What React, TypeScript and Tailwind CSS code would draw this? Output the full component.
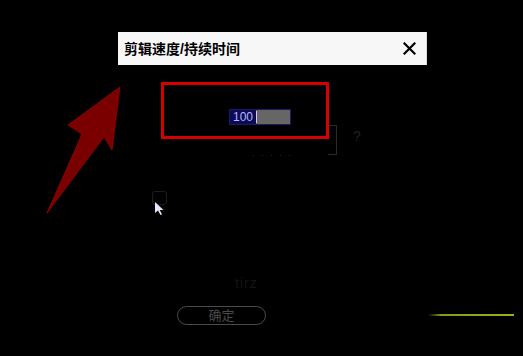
import React from "react";

export default function App() {
  return (
    <div
      className="relative w-[523px] h-[356px] bg-black overflow-hidden"
      style={{ fontFamily: '"Liberation Sans", "Noto Sans CJK SC", sans-serif' }}
    >
      {/* dialog */}
      <div className="flex flex-col pl-[118px] pt-[32px]">
        <div className="flex items-center justify-between w-[309px] h-[33px] bg-[#f7f7f7] pl-[6px] pr-[10px] border-r border-[#ddd]">
          <span className="text-[14px] font-bold text-black leading-none">
            剪辑速度/持续时间
          </span>
          <svg width="13" height="13" viewBox="0 0 13 13">
            <path d="M1.5 1.5 L11.5 11.5 M11.5 1.5 L1.5 11.5" stroke="#000" strokeWidth="2.2" strokeLinecap="square" />
          </svg>
        </div>

        {/* body */}
        <div className="relative flex flex-col w-[309px] h-[260px]">
          <div className="flex items-center ml-[111px] mt-[44px] w-[62px] h-[19px] bg-[#666] border border-[#1a1a66]">
            <span className="flex items-center h-full bg-[#0b0b55] px-[3px] text-[12px] text-[#b9b4ff] leading-none">
              100
            </span>
            <span className="w-px h-[12px] bg-[#e0c0ff]" />
          </div>

          <div className="flex items-start ml-[210px]">
            <div className="w-[9px] h-[30px] border-t border-r border-b border-[#2a2a2a]" />
            <span className="ml-[16px] mt-[4px] text-[14px] text-[#222] leading-none">?</span>
          </div>

          <div className="flex gap-[8px] ml-[135px] mt-[0px]">
            {[0, 1, 2, 3, 4].map((i) => (
              <span key={i} className="w-px h-px bg-[#1a1a88]" />
            ))}
          </div>

          <div className="flex flex-col ml-[34px] mt-[35px]">
            <div className="w-[15px] h-[14px] rounded-[3px] border border-[#1c1c1c]" />
            <svg width="12" height="16" viewBox="0 0 12 16" className="ml-[2px] mt-[-4px]">
              <path d="M1 1 L1 12 L4 9.5 L6.5 14 L8 13.3 L5.7 9 L9.5 9 Z" fill="#eae6ff" />
            </svg>
          </div>

          <span className="ml-[117px] mt-[59px] text-[14px] text-[#141414] leading-none tracking-[1px]">
            tirz
          </span>

          <button className="ml-[59px] mt-[16px] w-[89px] h-[23px] rounded-full border border-[#4a4a4a] text-[13px] text-[#4a4a4a] leading-none">
            确定
          </button>
        </div>
      </div>

      {/* annotations */}
      <div className="absolute left-[161px] top-[82px] w-[168px] h-[57px] border-[3px] border-[#d60000]" />

      <svg className="absolute left-0 top-0" width="523" height="356" viewBox="0 0 523 356">
        <path
          d="M120 87 L112 150 L104 137 L47 213 L82 134 L68 125 Z"
          fill="#7a0000"
          stroke="#a00000"
          strokeWidth="0.8"
        />
        <defs>
          <linearGradient id="gl" x1="0" x2="1">
            <stop offset="0" stopColor="#000" />
            <stop offset="0.15" stopColor="#8a9a10" />
            <stop offset="1" stopColor="#9cb018" />
          </linearGradient>
        </defs>
        <rect x="428" y="314" width="86" height="2" fill="url(#gl)" />
      </svg>
    </div>
  );
}
